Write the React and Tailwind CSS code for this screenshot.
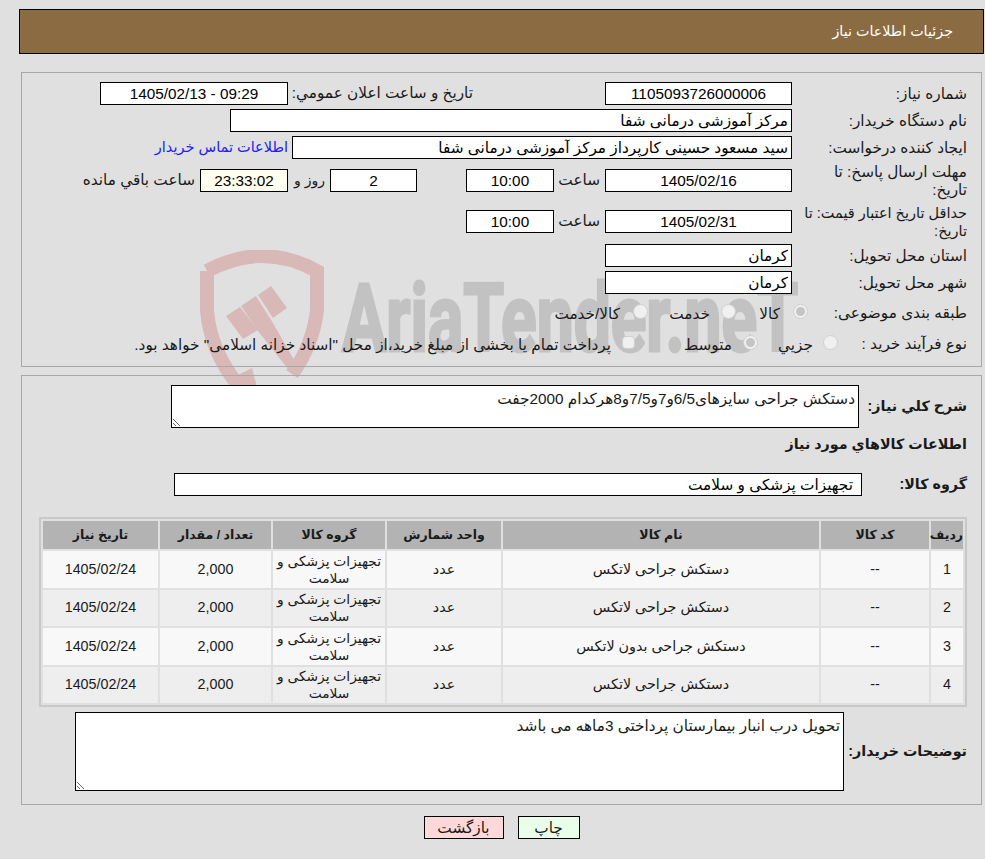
const field = "h-[23px] shrink-0 border border-black bg-white px-[3px] text-[15.3px] text-black outline-none";
const label = "shrink-0 leading-[18px] text-[#1a1a1a]";

const rows = [
  { id: 1, name: "دستکش جراحی لاتکس" },
  { id: 2, name: "دستکش جراحی لاتکس" },
  { id: 3, name: "دستکش جراحی بدون لاتکس" },
  { id: 4, name: "دستکش جراحی لاتکس" },
];

const Radio = ({ checked }) => (
  <span className="mb-[2px] flex h-[15px] w-[15px] shrink-0 items-center justify-center rounded-full border border-[#cfcfcf] bg-[#f0f0f0]">
    {checked && <span className="h-[9px] w-[9px] rounded-full bg-[#c4c4c4]" />}
  </span>
);

const Watermark = () => (
  <>
    <svg className="absolute left-[200px] top-[250px] h-[145px] w-[135px]" viewBox="0 0 135 145">
      <g fill="none" stroke="#d9b8b8" strokeWidth="14">
        <path d="M7 21 Q35 6 62 6 Q90 6 117 21 L117 60 Q113 95 92 124" />
        <path d="M7 21 L7 60 Q10 100 38 135" />
      </g>
      <g fill="#d9b8b8">
        <path d="M26 66 L40 57 L58 80 L43 89 Z" />
        <path d="M41 56 L56 46 L73 73 L98 117 L92 124 L58 81 Z" />
        <path d="M58 45 L71 36 L87 58 L73 68 Z" />
        <path d="M32 128 L52 118 L57 137 L44 140 Z" />
      </g>
    </svg>
    <svg className="absolute left-[340px] top-[260px] h-[100px] w-[465px] [direction:ltr]" viewBox="0 0 465 100">
      <text
        x="2"
        y="91"
        fontFamily="Roboto, sans-serif"
        fontWeight="700"
        fontSize="95"
        fill="#c2c2c2"
        stroke="#c2c2c2"
        strokeWidth="3"
        textLength="456"
        lengthAdjust="spacingAndGlyphs"
      >
        AriaTender.neT
      </text>
    </svg>
  </>
);

export default function App() {
  return (
    <div
      dir="rtl"
      className="relative min-h-[859px] w-[985px] overflow-hidden bg-[#e0e0e0] pl-[19px] pr-px pt-[9px] font-['Liberation_Sans','DejaVu_Sans',sans-serif] text-[15.3px] text-[#1a1a1a]"
    >
      <Watermark />

      <div className="relative flex h-[45px] items-center border border-black bg-[#8b6c42] pr-[30px] text-[14.3px] text-white">
        جزئیات اطلاعات نیاز
      </div>

      {/* main info */}
      <div className="relative mx-[2px] mt-[18px] h-[295px] border border-[#a8a8a8] pr-[14px] pt-[9px]">
        <div className="flex h-[23px] items-center">
          <span className={`${label} w-[175px]`}>شماره نیاز:</span>
          <input readOnly value="1105093726000006" className={`${field} w-[187px] text-center`} />
          <span className="mr-[132px] w-[185px] shrink-0">تاریخ و ساعت اعلان عمومي:</span>
          <input readOnly value="09:29 - 1405/02/13" className={`${field} w-[188px] text-center`} />
        </div>
        <div className="mt-1 flex h-[23px] items-center">
          <span className={`${label} w-[175px]`}>نام دستگاه خریدار:</span>
          <input readOnly value="مرکز آموزشی درمانی شفا" className={`${field} w-[562px]`} />
        </div>
        <div className="mt-1 flex h-[23px] items-center">
          <span className={`${label} w-[175px]`}>ایجاد کننده درخواست:</span>
          <input readOnly value="سید مسعود حسینی کارپرداز مرکز آموزشی درمانی شفا" className={`${field} w-[500px]`} />
          <span className="mr-1 text-[14.5px] text-[#2222ee]">اطلاعات تماس خریدار</span>
        </div>
        <div className="mt-1 flex h-[35px] items-center">
          <span className={`${label} w-[175px] pl-[20px]`}>مهلت ارسال پاسخ: تا تاریخ:</span>
          <input readOnly value="1405/02/16" className={`${field} w-[187px] text-center`} />
          <span className="w-[51px] shrink-0 pr-[5px]">ساعت</span>
          <input readOnly value="10:00" className={`${field} w-[88px] text-center`} />
          <input readOnly value="2" className={`${field} mr-[49px] w-[87px] text-center`} />
          <span className="w-[42px] shrink-0 whitespace-nowrap pr-[5px] text-[14px]">روز و</span>
          <input readOnly value="23:33:02" className="h-[23px] w-[88px] shrink-0 border border-black bg-[#fffff0] px-[3px] text-center text-[15.3px] text-black outline-none" />
          <span className="mr-[5px]">ساعت باقي مانده</span>
        </div>
        <div className="mt-[5px] flex h-[37px] items-center">
          <span className={`${label} w-[175px] text-[14.5px]`}>حداقل تاریخ اعتبار قیمت: تا تاریخ:</span>
          <input readOnly value="1405/02/31" className={`${field} w-[187px] text-center`} />
          <span className="w-[51px] shrink-0 pr-[5px]">ساعت</span>
          <input readOnly value="10:00" className={`${field} w-[88px] text-center`} />
        </div>
        <div className="mt-1 flex h-[23px] items-center">
          <span className={`${label} w-[175px]`}>استان محل تحویل:</span>
          <input readOnly value="کرمان" className={`${field} w-[187px]`} />
        </div>
        <div className="mt-1 flex h-[23px] items-center">
          <span className={`${label} w-[175px]`}>شهر محل تحویل:</span>
          <input readOnly value="کرمان" className={`${field} w-[187px]`} />
        </div>
        <div className="mt-[7px] flex h-[23px] items-center">
          <span className={`${label} w-[159px]`}>طبقه بندی موضوعی:</span>
          <span className="flex w-[72px] shrink-0 items-center gap-[13px]"><Radio checked /><span className="mt-[4px]">کالا</span></span>
          <span className="flex w-[88px] shrink-0 items-center gap-[11px]"><Radio /><span className="mt-[4px]">خدمت</span></span>
          <span className="flex shrink-0 items-center gap-[13px]"><Radio /><span className="mt-[4px]">کالا/خدمت</span></span>
        </div>
        <div className="mt-2 flex h-[23px] items-center">
          <span className={`${label} w-[129px]`}>نوع فرآیند خرید :</span>
          <span className="flex w-[80px] shrink-0 items-center gap-[10px]"><Radio /><span className="mt-[4px]">جزيي</span></span>
          <span className="flex w-[123px] shrink-0 items-center gap-[11px]"><Radio checked /><span className="mt-[4px]">متوسط</span></span>
          <span className="flex shrink-0 items-center gap-[11px]">
            <span className="mb-[2px] h-[13px] w-[13px] shrink-0 rounded-sm border border-[#cfcfcf] bg-[#f0f0f0]" />
            <span className="mt-[4px]">پرداخت تمام یا بخشی از مبلغ خرید،از محل "اسناد خزانه اسلامی" خواهد بود.</span>
          </span>
        </div>
      </div>

      {/* goods */}
      <div className="relative mx-[2px] mt-2 h-[430px] border border-[#a8a8a8] pr-[14px] pt-[9px]">
        <div className="flex items-center">
          <span className="w-[108px] shrink-0 text-[14.3px] font-bold">شرح کلي نیاز:</span>
          <textarea
            readOnly
            value="دستکش جراحی سایزهای6/5و7و7/5و8هرکدام 2000جفت"
            className="h-[43px] w-[688px] shrink-0 border border-black bg-white px-[3px] pt-[4px] text-[15.3px] leading-[18px] outline-none"
          />
        </div>
        <div className="mt-[6px] h-[22px] text-[14.3px] font-bold">اطلاعات کالاهاي مورد نیاز</div>
        <div className="mt-[17px] flex items-center">
          <span className="w-[105px] shrink-0 text-[14.3px] font-bold">گروه کالا:</span>
          <input readOnly value="تجهیزات پزشکی و سلامت" className={`${field} w-[688px] pr-[8px]`} />
        </div>

        <table className="mt-[21px] w-[928px] table-fixed border-separate border-spacing-[2px] border-2 border-[#c8c8c8] text-center text-[14.3px]">
          <colgroup>
            <col className="w-[32px]" />
            <col className="w-[108px]" />
            <col className="w-[316px]" />
            <col className="w-[114px]" />
            <col className="w-[112px]" />
            <col className="w-[111px]" />
            <col />
          </colgroup>
          <thead>
            <tr className="h-[28px] bg-[#b3b3b3] text-[12.5px] font-bold">
              <th>ردیف</th>
              <th>کد کالا</th>
              <th>نام کالا</th>
              <th>واحد شمارش</th>
              <th>گروه کالا</th>
              <th>تعداد / مقدار</th>
              <th>تاریخ نیاز</th>
            </tr>
          </thead>
          <tbody>
            {rows.map((row) => (
              <tr key={row.id} className={row.id % 2 ? "h-[37px] bg-[#f8f8f8]" : "h-[36px] bg-[#eeeeee]"}>
                <td>{row.id}</td>
                <td>--</td>
                <td>{row.name}</td>
                <td>عدد</td>
                <td className="whitespace-nowrap text-[13.8px] leading-[17px]">تجهیزات پزشکی و<br />سلامت</td>
                <td>2,000</td>
                <td>1405/02/24</td>
              </tr>
            ))}
          </tbody>
        </table>

        <div className="mt-[5px] flex items-center">
          <span className="w-[123px] shrink-0 text-[14.3px] font-bold">توضیحات خریدار:</span>
          <textarea
            readOnly
            value="تحویل درب انبار بیمارستان پرداختی 3ماهه می باشد"
            className="h-[79px] w-[769px] shrink-0 border border-black bg-white px-[3px] pt-[4px] text-[15.3px] leading-[18px] outline-none"
          />
        </div>
      </div>

      <div className="relative mt-[11px] flex justify-center gap-[14px]">
        <button className="h-[23px] w-[62px] border border-black bg-[#eaffea] text-[15.3px]">چاپ</button>
        <button className="h-[23px] w-[80px] border border-black bg-[#ffd9d9] text-[15.3px]">بازگشت</button>
      </div>
    </div>
  );
}
